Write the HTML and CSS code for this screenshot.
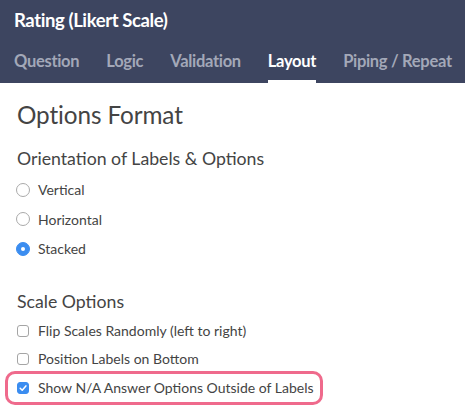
FILE: index.html
```html
<!DOCTYPE html>
<html>
<head>
<meta charset="utf-8">
<link rel="stylesheet" href="styles.css">
</head>
<body>
<div class="header">
  <div class="title">Rating (Likert Scale)</div>
  <nav class="tabs">
    <span class="tab">Question</span>
    <span class="tab">Logic</span>
    <span class="tab">Validation</span>
    <span class="tab active">Layout</span>
    <span class="tab">Piping / Repeat</span>
  </nav>
</div>
<div class="content">
  <h1 class="h1">Options Format</h1>
  <h2 class="h2">Orientation of Labels &amp; Options</h2>
  <div class="radios">
    <div class="opt"><span class="radio"></span>Vertical</div>
    <div class="opt"><span class="radio"></span>Horizontal</div>
    <div class="opt"><span class="radio on"></span>Stacked</div>
  </div>
  <h2 class="h2 scale">Scale Options</h2>
  <div class="checks">
    <div class="opt"><span class="check"></span>Flip Scales Randomly (left to right)</div>
    <div class="opt"><span class="check"></span>Position Labels on Bottom</div>
    <div class="opt hl"><span class="check on"><svg viewBox="0 0 12 12" width="12" height="12"><path d="M3.2 6.3 L5.2 8.2 L8.9 3.9" fill="none" stroke="#fff" stroke-width="1.5" stroke-linecap="round" stroke-linejoin="round"/></svg></span>Show N/A Answer Options Outside of Labels</div>
  </div>
</div>
</body>
</html>
```
FILE: styles.css
```css
* { box-sizing: border-box; }
body { margin: 0; font-family: Lato, "Open Sans", sans-serif; background: #fff; color: #444; }
.header { background: #3d4560; height: 83px; padding: 9px 0 0 14px; overflow: hidden; }
.title { color: #fff; font-weight: 700; font-size: 18.5px; letter-spacing: -0.4px; line-height: 22px; }
.tabs { display: flex; gap: 27px; margin-top: 20px; }
.tab { color: #a3a8b8; font-weight: 700; font-size: 16.5px; letter-spacing: -0.3px; line-height: 20px; padding-bottom: 9px; border-bottom: 3px solid transparent; }
.tab.active { color: #fff; border-bottom-color: #fff; }
.content { padding: 17px 0 0 17px; }
.h1 { margin: 0; font-weight: 400; font-size: 24.3px; line-height: 30px; color: #444; letter-spacing: -0.1px; }
.h2 { margin: 18px 0 5px; font-weight: 400; font-size: 17.7px; line-height: 22px; color: #444; }
.h2.scale { margin-top: 27px; margin-bottom: 4px; }
.radios .opt { height: 29.5px; }
.opt { display: flex; align-items: center; height: 28px; font-size: 14px; color: #444; }
.radio { width: 14px; height: 14px; border: 1px solid #aaa; border-radius: 50%; margin-left: -1px; margin-right: 8px; flex: none; }
.radio.on { background: #3b8df0; border-color: #3b8df0; position: relative; }
.radio.on::after { content: ""; position: absolute; width: 4px; height: 4px; background: #fff; border-radius: 50%; left: 4px; top: 4px; }
.check { width: 12px; height: 12px; border: 1px solid #a5a5a5; border-radius: 3px; margin-right: 9px; flex: none; display: flex; align-items: center; justify-content: center; }
.check.on { background: #3b8df0; border-color: #3b8df0; }
.check svg { flex: none; }
.hl { margin: -2px 0 0 -12px; width: 318px; height: 34px; padding-left: 9px; border: 3px solid #ef6a8c; border-radius: 10px; }
```
